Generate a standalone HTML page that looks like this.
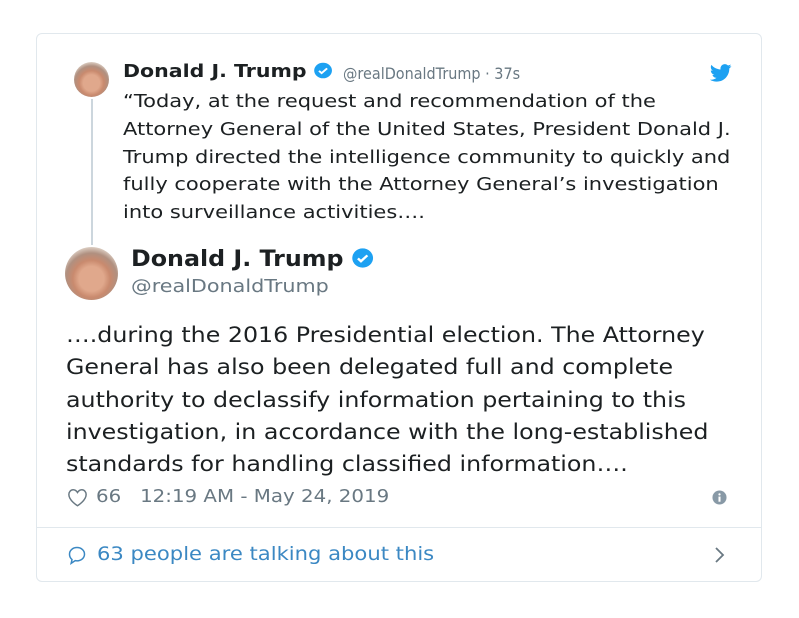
<html><head><style>
body{margin:0;background:#fff;width:799px;height:618px;position:relative;font-family:"DejaVu Sans","Liberation Sans",sans-serif;color:#1c2022;overflow:hidden}
.card{position:absolute;left:36px;top:33px;width:726px;height:549px;border:1px solid #e1e8ed;border-radius:6px;box-sizing:border-box}
.a{position:absolute;white-space:nowrap;transform-origin:0 0}
.av{position:absolute;border-radius:50%;background:radial-gradient(circle at 50% 60%,#e0a88c 0 30%,#c98a6e 45%,#b09080 62%,#e6dcd2 80%,#c8c0b8 100%)}
</style></head><body>
<div class="card"></div>
<div class="av" style="left:74px;top:62px;width:35px;height:35px"></div>
<div style="position:absolute;left:91px;top:99px;width:2px;height:146px;background:#ccd6dd"></div>
<div class="a" style="left:123px;top:61px;font-size:18px;font-weight:bold;transform:scaleX(1.14)">Donald J. Trump <svg width="17" height="19" viewBox="0 0 24 24" style="vertical-align:-3px"><circle cx="12" cy="12" r="11" fill="#1da1f2"/><path d="M7 12.5l3.2 3.2L17 9" stroke="#fff" stroke-width="2.6" fill="none"/></svg></div>
<div class="a" style="left:343px;top:64px;font-size:16px;color:#697882;transform:scaleX(0.9)">@realDonaldTrump · 37s</div>
<svg style="position:absolute;left:710px;top:64px" width="22" height="18" viewBox="0 0 24 20"><path d="M23.6 2.4c-.9.4-1.8.6-2.8.8 1-.6 1.8-1.6 2.1-2.7-.9.6-2 1-3.1 1.2C18.9.7 17.6.1 16.3.1c-2.7 0-4.9 2.200-4.9 4.9 0 .4 0 .8.1 1.1C7.4 5.9 3.8 4 1.4 1 1 1.7.7 2.6.7 3.5c0 1.7.9 3.200 2.2 4.1-.8 0-1.600-.2-2.2-.6v.1c0 2.4 1.7 4.4 3.9 4.8-.4.1-.8.2-1.3.2-.3 0-.6 0-.9-.1.6 2 2.4 3.4 4.6 3.4-1.7 1.3-3.8 2.1-6.1 2.1-.4 0-.8 0-1.2-.1 2.2 1.4 4.8 2.2 7.5 2.2 9.1 0 14-7.5 14-14v-.6c1-.7 1.8-1.6 2.4-2.6z" fill="#1da1f2"/></svg>
<div class="a" style="left:123px;top:88px;font-size:18px;line-height:27.8px;transform:scaleX(1.165)">“Today, at the request and recommendation of the<br>Attorney General of the United States, President Donald J.<br>Trump directed the intelligence community to quickly and<br>fully cooperate with the Attorney General’s investigation<br>into surveillance activities….</div>
<div class="av" style="left:65px;top:247px;width:53px;height:53px"></div>
<div class="a" style="left:131px;top:247px;font-size:22px;font-weight:bold;transform:scaleX(1.08)">Donald J. Trump <svg width="21" height="22" viewBox="0 0 24 24" style="vertical-align:-3px"><circle cx="12" cy="12" r="11" fill="#1da1f2"/><path d="M7 12.5l3.2 3.2L17 9" stroke="#fff" stroke-width="2.6" fill="none"/></svg></div>
<div class="a" style="left:131px;top:276px;font-size:18px;color:#697882;transform:scaleX(1.15)">@realDonaldTrump</div>
<div class="a" style="left:66px;top:319px;font-size:21px;line-height:32.3px;transform:scaleX(1.13)">….during the 2016 Presidential election. The Attorney<br>General has also been delegated full and complete<br>authority to declassify information pertaining to this<br>investigation, in accordance with the long-established<br>standards for handling classified information….</div>
<svg style="position:absolute;left:67px;top:488px" width="21" height="19" viewBox="0 0 24 22"><path d="M12 20.5S2 14.5 2 7.5C2 4.5 4.3 2 7 2c2.2 0 3.9 1.4 5 3.2C13.1 3.4 14.8 2 17 2c2.7 0 5 2.5 5 5.5 0 7-10 13-10 13z" fill="none" stroke="#697882" stroke-width="1.7"/></svg>
<div class="a" style="left:96px;top:486px;font-size:18px;color:#697882;transform:scaleX(1.10)">66 &nbsp; 12:19 AM - May 24, 2019</div>
<svg style="position:absolute;left:712px;top:490px" width="15" height="15" viewBox="0 0 16 16"><circle cx="8" cy="8" r="7.5" fill="#8899a6"/><rect x="6.9" y="7" width="2.2" height="5.5" fill="#fff"/><circle cx="8" cy="4.6" r="1.2" fill="#fff"/></svg>
<div style="position:absolute;left:37px;top:527px;width:724px;height:1px;background:#e1e8ed"></div>
<svg style="position:absolute;left:67px;top:545px" width="20" height="20" viewBox="0 0 24 24"><path d="M12 3c5 0 9 3.4 9 8s-4 8-9 8c-.8 0-1.5-.1-2.2-.2L5 22l1-4.5C4.2 16 3 13.7 3 11c0-4.6 4-8 9-8z" fill="none" stroke="#3b88c3" stroke-width="1.8"/></svg>
<div class="a" style="left:97px;top:543px;font-size:19px;color:#3b88c3;transform:scaleX(1.11)">63 people are talking about this</div>
<svg style="position:absolute;left:714px;top:546px" width="12" height="18" viewBox="0 0 12 18"><path d="M2 2l7 7-7 7" fill="none" stroke="#697882" stroke-width="1.8"/></svg>
</body></html>
